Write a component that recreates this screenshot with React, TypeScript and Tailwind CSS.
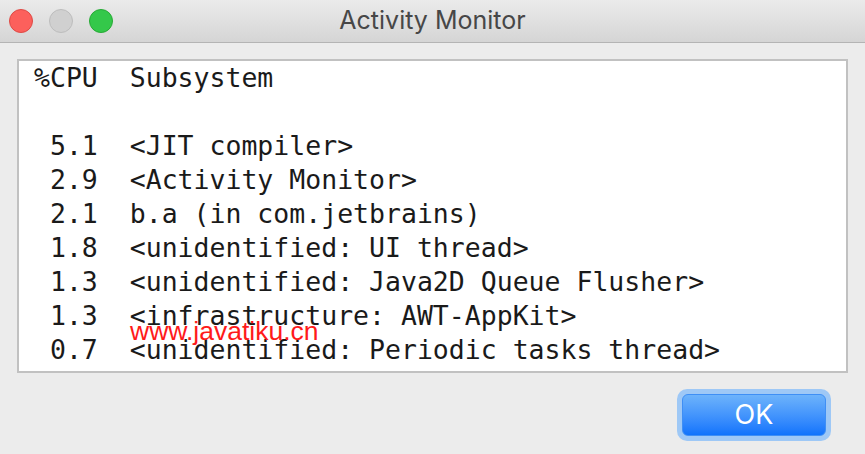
import React from 'react';

const rows: [string, string][] = [
  ['5.1', '<JIT compiler>'],
  ['2.9', '<Activity Monitor>'],
  ['2.1', 'b.a (in com.jetbrains)'],
  ['1.8', '<unidentified: UI thread>'],
  ['1.3', '<unidentified: Java2D Queue Flusher>'],
  ['1.3', '<infrastructure: AWT-AppKit>'],
  ['0.7', '<unidentified: Periodic tasks thread>'],
];

const mono = { fontFamily: '"DejaVu Sans Mono", "Liberation Mono", monospace' };

export default function App() {
  return (
    <div className="w-[865px] h-[454px] bg-[#ececec] flex flex-col overflow-hidden">
      {/* title bar */}
      <div className="relative h-[43px] flex items-center justify-center bg-gradient-to-b from-[#ebebeb] to-[#d5d5d5] border-b border-[#b4b4b4]">
        <div className="absolute left-[9px] top-[9px] flex gap-[16px]">
          <span className="w-[24px] h-[24px] rounded-full bg-[#fc605c] border border-[#de4a45]" />
          <span className="w-[24px] h-[24px] rounded-full bg-[#d0d0d0] border border-[#bdbdbd]" />
          <span className="w-[24px] h-[24px] rounded-full bg-[#34c84a] border border-[#27aa35]" />
        </div>
        <span className="text-[25px] text-[#474747] pb-[1px]" style={{ fontFamily: 'Inter, "Noto Sans", sans-serif' }}>
          Activity Monitor
        </span>
      </div>

      {/* text panel */}
      <div className="mt-[16px] ml-[17px] w-[831px] h-[314px] bg-white border-2 border-[#c1c1c1] relative">
        <div className="pl-[15px] text-[26.5px] leading-[34px] text-[#1a1a1a] whitespace-pre" style={mono}>
          <div>%CPU  Subsystem</div>
          <div>&nbsp;</div>
          {rows.map(([cpu, name], i) => (
            <div key={i}>{' ' + cpu + '  ' + name}</div>
          ))}
        </div>
        <span
          className="absolute left-[111px] top-[256px] text-[26.5px] leading-[28px] text-[#ff1a1a]"
          style={{ fontFamily: '"Liberation Sans", Arial, sans-serif' }}
        >
          www.javatiku.cn
        </span>
      </div>

      {/* footer */}
      <div className="flex justify-end pr-[34px] pt-[16px]">
        <div className="p-[5px] rounded-[10px] bg-[#9ec8f6]">
          <button
            className="w-[144px] h-[42px] rounded-[6px] bg-gradient-to-b from-[#6db3fb] to-[#0f73fc] border border-[#3f8ff5] text-white text-[27px] flex items-center justify-center"
            style={{ fontFamily: 'Inter, "Noto Sans", sans-serif' }}
          >
            OK
          </button>
        </div>
      </div>
    </div>
  );
}
